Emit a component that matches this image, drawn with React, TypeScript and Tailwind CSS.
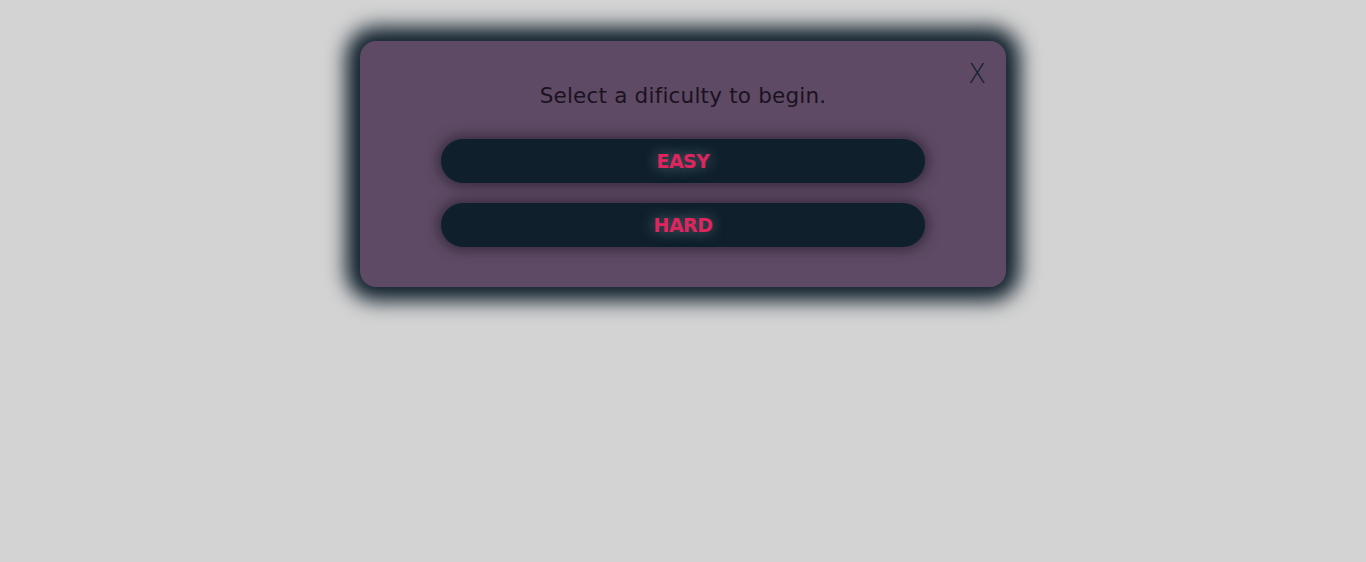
import React from "react";

export default function App() {
  return (
    <div className="min-h-[562px] w-full bg-[#d3d3d3] pt-[41px] font-['DejaVu_Sans',sans-serif]">
      <div className="relative mx-auto flex h-[246px] w-[646px] flex-col items-center rounded-[16px] bg-[#5e4a64] shadow-[0_0_20px_14px_#0f1f2b]">
        <button className="absolute right-[20px] top-[20px] text-[26px] font-light leading-none text-[#121e2a]">
          X
        </button>
        <h1 className="mt-[41px] text-[21.5px] leading-[28px] tracking-[0.2px] text-[#1a1220]">
          Select a dificulty to begin.
        </h1>
        <div className="mt-[29px] flex flex-col gap-[20px]">
          {["EASY", "HARD"].map((label) => (
            <button
              key={label}
              className="h-[44px] w-[484px] rounded-full bg-[#0f202c] text-[19px] font-bold tracking-[-0.5px] text-[#e0245e] shadow-[0_0_12px_4px_#3a2e44] [text-shadow:0_0_14px_rgba(160,185,195,0.55)]"
            >
              {label}
            </button>
          ))}
        </div>
      </div>
    </div>
  );
}
